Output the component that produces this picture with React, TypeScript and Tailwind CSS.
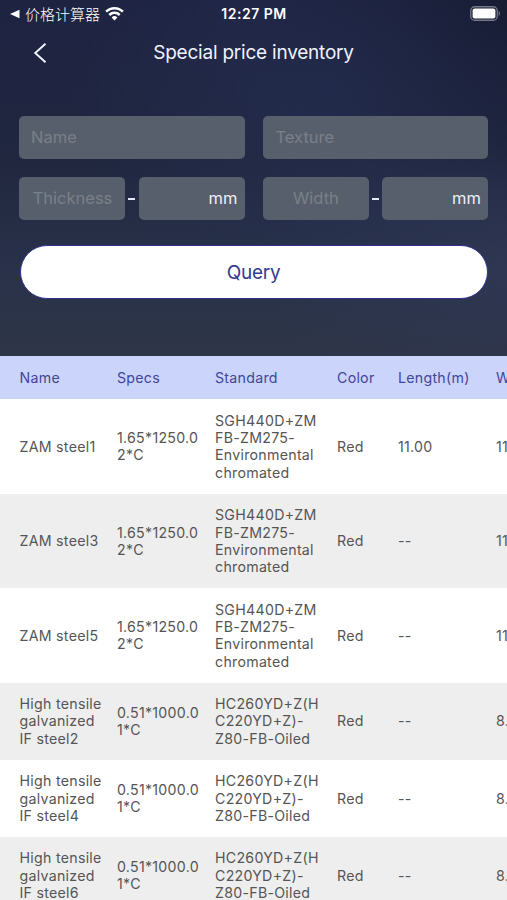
type Item = {
  name: string[];
  specs: string[];
  standard: string[];
  color: string;
  length: string;
  weight: string;
};

const zamSpecs = ["1.65*1250.0", "2*C"];
const zamStandard = ["SGH440D+ZM", "FB-ZM275-", "Environmental", "chromated"];
const tensileSpecs = ["0.51*1000.0", "1*C"];
const tensileStandard = ["HC260YD+Z(H", "C220YD+Z)-", "Z80-FB-Oiled"];

const items: Item[] = [
  { name: ["ZAM steel1"], specs: zamSpecs, standard: zamStandard, color: "Red", length: "11.00", weight: "11.00" },
  { name: ["ZAM steel3"], specs: zamSpecs, standard: zamStandard, color: "Red", length: "--", weight: "11.00" },
  { name: ["ZAM steel5"], specs: zamSpecs, standard: zamStandard, color: "Red", length: "--", weight: "11.00" },
  { name: ["High tensile", "galvanized", "IF steel2"], specs: tensileSpecs, standard: tensileStandard, color: "Red", length: "--", weight: "8.00" },
  { name: ["High tensile", "galvanized", "IF steel4"], specs: tensileSpecs, standard: tensileStandard, color: "Red", length: "--", weight: "8.00" },
  { name: ["High tensile", "galvanized", "IF steel6"], specs: tensileSpecs, standard: tensileStandard, color: "Red", length: "--", weight: "8.00" }
];

const columns = "grid w-[594px] grid-cols-[97.5px_98px_122px_61px_98px_98px] items-center pl-[19.5px]";

function StatusBar() {
  return (
    <div className="grid h-[27px] grid-cols-3 items-center pr-[6px] pl-[10px] text-white">
      <div className="flex items-center">
        <svg className="h-[10px] w-[10px]" viewBox="0 0 10 10" fill="currentColor">
          <path d="M0 5 9.5 0.7v8.6z" />
        </svg>
        <span className="ml-[5px] font-['Noto_Sans_CJK_SC',sans-serif] text-[15px] leading-5 font-light whitespace-nowrap">价格计算器</span>
        <svg className="ml-[5px] h-[15px] w-[19px] shrink-0" viewBox="0 0 19 15" fill="none" stroke="currentColor" strokeWidth="2.5">
          <path d="M1.1 5.7a11.9 11.9 0 0 1 16.8 0" />
          <path d="M4.3 9a7.4 7.4 0 0 1 10.4 0" />
          <path d="M9.5 14.5 6.6 11.5a4.1 4.1 0 0 1 5.8 0z" fill="currentColor" stroke="none" />
        </svg>
      </div>
      <span className="-ml-[3px] text-center text-[14px] font-semibold tracking-[0.5px] whitespace-nowrap">12:27 PM</span>
      <svg className="h-[15px] w-[31px] justify-self-end" viewBox="0 0 31 15" fill="none">
        <rect x="0.75" y="0.75" width="26.5" height="13.5" rx="4" stroke="white" strokeOpacity="0.4" strokeWidth="1.3" />
        <rect x="2.6" y="2.6" width="22.8" height="9.8" rx="2" fill="white" />
        <path d="M28.7 5.2c1.6.5 1.6 4.1 0 4.6z" fill="white" fillOpacity="0.45" />
      </svg>
    </div>
  );
}

function Range({ label }: { label: string }) {
  return (
    <div className="flex items-center">
      <div className="flex h-[43px] w-[106px] items-center justify-center rounded-[5px] bg-[#575f6d] pl-px text-[16.5px] text-[#7b7f87]">{label}</div>
      <div className="flex flex-1 justify-center">
        <span className="h-[2px] w-[7px] bg-[#e4e7f5]" />
      </div>
      <div className="flex h-[43px] w-[106px] items-center justify-end rounded-[5px] bg-[#575f6d] pr-[7px] text-[16.5px] text-[#eceffa]">mm</div>
    </div>
  );
}

function Lines({ lines }: { lines: string[] }) {
  return (
    <div>
      {lines.map((line) => (
        <div key={line} className="whitespace-nowrap">{line}</div>
      ))}
    </div>
  );
}

export default function App() {
  return (
    <main className="h-[900px] w-[507px] overflow-hidden bg-white font-[Inter,sans-serif]">
      <header className="h-[356.4px] bg-[radial-gradient(ellipse_at_65%_25%,rgba(38,48,86,0.55),transparent_55%),radial-gradient(ellipse_at_100%_0%,rgba(21,25,45,0.9),transparent_38%),radial-gradient(ellipse_at_100%_75%,rgba(48,56,86,0.7),transparent_35%),linear-gradient(180deg,#1e2342_0%,#20273f_45%,#29324a_75%,#2e3547_100%)]">
        <StatusBar />
        <div className="grid h-[51px] grid-cols-[60px_1fr_60px] items-center">
          <svg className="ml-[33px] h-5 w-[14px]" viewBox="0 0 14 20" fill="none" stroke="#f3f5ff" strokeWidth="1.9">
            <path d="M12.5 0.7 2.2 10l10.3 9.3" />
          </svg>
          <h1 className="pt-px text-center text-[19px] tracking-[-0.22px] whitespace-nowrap text-[#eff2fd]">Special price inventory</h1>
        </div>
        <div className="grid grid-cols-2 gap-[18px] px-[19px] pt-[38px]">
          <div className="flex h-[43px] items-center rounded-[5px] bg-[#575f6d] pl-3 text-[16.5px] text-[#7b7f87]">Name</div>
          <div className="flex h-[43px] items-center rounded-[5px] bg-[#575f6d] pl-[13px] text-[16.5px] text-[#7b7f87]">Texture</div>
          <Range label="Thickness" />
          <Range label="Width" />
        </div>
        <div className="px-[19.5px] pt-[24.5px]">
          <button className="h-[54px] w-full rounded-full border border-[#2f3192] bg-white pt-[3px] text-[19px] tracking-[-0.25px] text-[#343a91]">Query</button>
        </div>
      </header>
      <section className="text-[14.2px] leading-[17.35px] tracking-[0.27px] text-[#555]">
        <div className={`${columns} h-[42.8px] bg-[#cbd4fb] text-[#41469b]`}>
          <span>Name</span>
          <span>Specs</span>
          <span>Standard</span>
          <span>Color</span>
          <span>Length(m)</span>
          <span>Weight</span>
        </div>
        {items.map((item, i) => (
          <div key={i} className={`${columns} py-[12.55px] ${i % 2 ? "bg-[#eee]" : "bg-white"}`}>
            <Lines lines={item.name} />
            <Lines lines={item.specs} />
            <Lines lines={item.standard} />
            <span>{item.color}</span>
            <span>{item.length}</span>
            <span>{item.weight}</span>
          </div>
        ))}
      </section>
    </main>
  );
}
